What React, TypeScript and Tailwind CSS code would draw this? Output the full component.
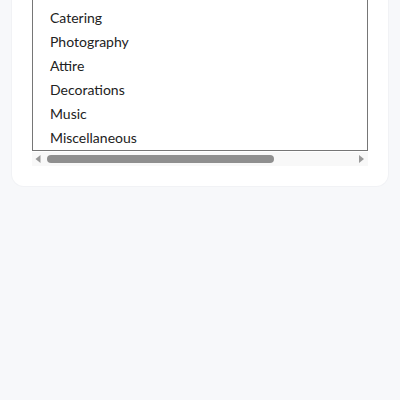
const items = ["Catering", "Photography", "Attire", "Decorations", "Music", "Miscellaneous"];

const App = () => {
  return (
    <div className="flex h-screen flex-col overflow-hidden bg-[#f7f8fa] px-3 font-['Lato',sans-serif]">
      {/* Card */}
      <div className="mt-[-39px] rounded-xl bg-white p-5 shadow-[0_0_0_1px_#f1f2f5]">
        {/* List box (top part scrolled out of view) */}
        <div className="border border-[#767676] bg-white pt-6">
          {items.map((item) => (
            <div
              key={item}
              className="h-6 pl-[17px] text-[14px] leading-6 text-[#222]"
            >
              {item}
            </div>
          ))}
        </div>

        {/* Horizontal scrollbar */}
        <div className="mt-px flex h-[14px] items-center bg-[#f8f8f8]">
          <svg width="15" height="14" viewBox="0 0 15 14" className="shrink-0">
            <polygon points="8.5,3 8.5,11 3.5,7" fill="#999999" />
          </svg>
          <div className="h-2 w-[227px] rounded-full bg-[#8f8f8f]" />
          <div className="flex-1" />
          <svg width="15" height="14" viewBox="0 0 15 14" className="shrink-0">
            <polygon points="6,3 6,11 11,7" fill="#999999" />
          </svg>
        </div>
      </div>
    </div>
  );
};

export default App;
